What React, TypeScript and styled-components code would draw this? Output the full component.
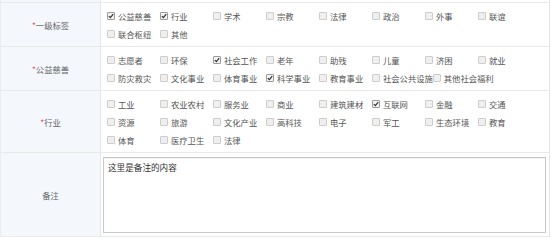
import React from 'react'
import styled, { createGlobalStyle } from 'styled-components'

const GlobalStyle = createGlobalStyle`
  body { margin: 0; background: #fff; font-family: "Noto Sans CJK SC", "Liberation Sans", sans-serif; }
`

interface IOption { text: string; checked?: boolean }
interface IField { label: string; required?: boolean; options: IOption[] }

const fields: IField[] = [
  {
    label: '一级标签', required: true,
    options: [
      { text: '公益慈善', checked: true }, { text: '行业', checked: true }, { text: '学术' }, { text: '宗教' },
      { text: '法律' }, { text: '政治' }, { text: '外事' }, { text: '联谊' }, { text: '联合枢纽' }, { text: '其他' },
    ],
  },
  {
    label: '公益慈善', required: true,
    options: [
      { text: '志愿者' }, { text: '环保' }, { text: '社会工作', checked: true }, { text: '老年' }, { text: '助残' },
      { text: '儿童' }, { text: '济困' }, { text: '就业' }, { text: '防灾救灾' }, { text: '文化事业' },
      { text: '体育事业' }, { text: '科学事业', checked: true }, { text: '教育事业' }, { text: '社会公共设施' },
      { text: '其他社会福利' },
    ],
  },
  {
    label: '行业', required: true,
    options: [
      { text: '工业' }, { text: '农业农村' }, { text: '服务业' }, { text: '商业' }, { text: '建筑建材' },
      { text: '互联网', checked: true }, { text: '金融' }, { text: '交通' }, { text: '资源' }, { text: '旅游' },
      { text: '文化产业' }, { text: '高科技' }, { text: '电子' }, { text: '军工' }, { text: '生态环境' },
      { text: '教育' }, { text: '体育' }, { text: '医疗卫生' }, { text: '法律' },
    ],
  },
]

// css
const Table = styled.div`
  width: 550px;
  border-left: 1px solid #ececec;
  border-right: 1px solid #e4e4e4;
  box-sizing: border-box;
`
const TopEdge = styled.div`
  height: 2px;
  display: grid;
  grid-template-columns: 100px 1fr;
  border-bottom: 1px solid #e9e9e9;
  &::before { content: ''; background: #f4f8fd; border-right: 1px solid #e6e6e6; }
`
const Row = styled.div`
  display: grid;
  grid-template-columns: 100px 1fr;
  border-bottom: 1px solid #e9e9e9;
`
const Label = styled.div`
  background: #f4f8fd;
  border-right: 1px solid #e6e6e6;
  display: flex;
  align-items: center;
  justify-content: center;
  font-size: 8.3px;
  color: #666;
`
const Star = styled.span`color: #e85555;`
const Group = styled.div`
  display: flex;
  flex-wrap: wrap;
  padding: 4px 4px 3px 6px;
`
const Item = styled.label`
  min-width: 53px;
  height: 18px;
  display: flex;
  align-items: center;
  gap: 2px;
  font-size: 8.3px;
  color: #555;
`
const Box = styled.span<{ $checked?: boolean }>`
  width: 8px;
  height: 8px;
  box-sizing: border-box;
  border: 1px solid ${p => (p.$checked ? '#9a9a9a' : '#cdcdcd')};
  background: ${p => (p.$checked ? '#f4f4f4' : '#efefef')};
  border-radius: 1px;
  display: flex;
  align-items: center;
  justify-content: center;
  margin-right: 1px;
`
const NoteCell = styled.div`
  padding: 4px 3px 3px 2px;
  display: flex;
`
const Note = styled.textarea`
  flex: 1;
  height: 76px;
  box-sizing: border-box;
  border: 1px solid #c9c9c9;
  box-shadow: inset 0 1px 1px rgba(0,0,0,0.06);
  resize: none;
  padding: 3px 4px;
  font-family: "Noto Sans CJK SC", "Liberation Sans", sans-serif;
  font-size: 8.6px;
  color: #333;
  outline: none;
`

const Check = () => (
  <svg width="6" height="6" viewBox="0 0 6 6">
    <path d="M0.8 3.1 L2.4 4.7 L5.2 1.2" fill="none" stroke="#333" strokeWidth="1.2" />
  </svg>
)

// template
const App: React.FC = () => (
  <>
    <GlobalStyle />
    <Table>
      <TopEdge />
      {fields.map(field => (
        <Row key={field.label}>
          <Label>{field.required && <Star>*</Star>}{field.label}</Label>
          <Group>
            {field.options.map(opt => (
              <Item key={opt.text}>
                <Box $checked={opt.checked}>{opt.checked && <Check />}</Box>
                {opt.text}
              </Item>
            ))}
          </Group>
        </Row>
      ))}
      <Row>
        <Label>备注</Label>
        <NoteCell>
          <Note defaultValue="这里是备注的内容" />
        </NoteCell>
      </Row>
    </Table>
  </>
)

export default App
